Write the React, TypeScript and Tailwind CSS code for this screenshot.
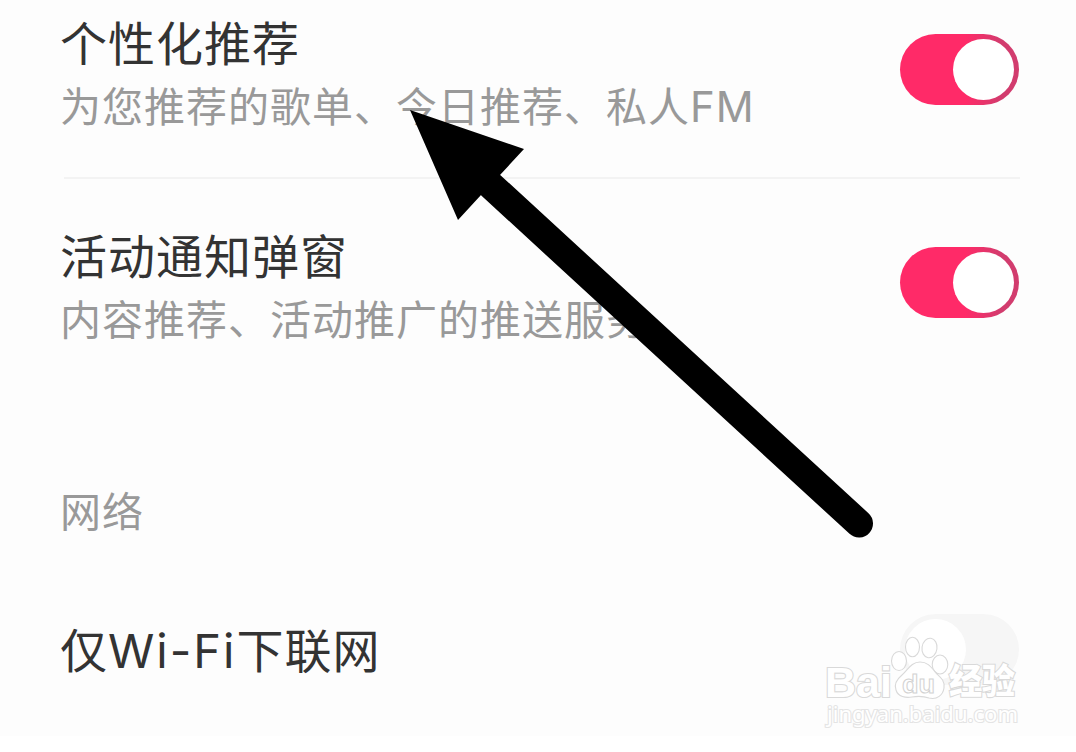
import React from 'react';
import { clsx } from 'clsx';

interface SwitchProps {
  checked: boolean;
  label: string;
}

const Switch: React.FC<SwitchProps> = ({ checked, label }) => (
  <button
    role="switch"
    aria-checked={checked}
    aria-label={label}
    className={clsx(
      'flex h-[71px] w-[119px] shrink-0 items-center rounded-full px-[5px]',
      checked
        ? 'justify-end bg-[linear-gradient(to_right,#ff2a68_55%,#d23c6e_85%)]'
        : 'justify-start bg-[#f6f6f6]'
    )}
  >
    <span className="size-[61px] rounded-full bg-white" />
  </button>
);

interface SettingRowProps {
  title: React.ReactNode;
  label: string;
  description?: React.ReactNode;
  checked: boolean;
}

const SettingRow: React.FC<SettingRowProps> = ({ title, label, description, checked }) => (
  <div className={clsx('flex justify-between', description ? 'items-start' : 'items-center')}>
    <div className="whitespace-nowrap">
      <h3
        className={clsx(
          'text-[47px] leading-[60px] tracking-[1px] text-[#333333]',
          description ? 'h-[62px]' : 'h-[64px]'
        )}
      >
        {title}
      </h3>
      {description && (
        <p className="h-[62px] text-[41px] leading-[62px] tracking-[1px] text-[#999999]">{description}</p>
      )}
    </div>
    <div className={clsx(description && 'pt-[23px]')}>
      <Switch checked={checked} label={label} />
    </div>
  </div>
);

const Watermark = () => (
  <svg
    className="absolute top-[630px] left-[820px]"
    width="210"
    height="105"
    viewBox="0 0 210 105"
    fill="#ffffff"
    stroke="#d9d9d9"
    strokeWidth="1.1"
  >
    <g className="[paint-order:stroke]" strokeWidth="2.2">
      <text x="5" y="67" fontSize="43" fontWeight="700" fontFamily="Liberation Sans" textLength="67" lengthAdjust="spacingAndGlyphs">Bai</text>
      <text x="129" y="64" fontSize="35" fontWeight="900" fontFamily="Noto Sans CJK SC" textLength="66" lengthAdjust="spacingAndGlyphs">经验</text>
      <text x="7" y="92" fontSize="22" fontWeight="400" fontFamily="Noto Sans" stroke="#e4e4e4" textLength="191" lengthAdjust="spacingAndGlyphs">jingyan.baidu.com</text>
    </g>
    <ellipse cx="79" cy="31" rx="7.5" ry="9.5" />
    <ellipse cx="92.5" cy="17" rx="7" ry="9.8" />
    <ellipse cx="109.5" cy="18" rx="7.5" ry="9.8" transform="rotate(8 109.5 18)" />
    <ellipse cx="120" cy="34.5" rx="7.8" ry="9.5" />
    <path d="M100 32C91 32 88 40 82 45C76 50 74 55 76 60C78 67 86 68 92 67C98 66 103 66 109 68C117 70 123 65 124 58C125 50 120 47 116 43C111 37 108 32 100 32Z" />
    <text x="82" y="62.5" fontSize="26" fontWeight="700" fontFamily="Liberation Sans" stroke="#d2d2d2" strokeWidth="1" textLength="33" lengthAdjust="spacingAndGlyphs">du</text>
  </svg>
);

export default function App() {
  return (
    <div className="relative h-[752px] w-[1076px] overflow-hidden bg-white font-['Noto_Sans_CJK_SC',sans-serif]">
      <main className="h-[736px] bg-[#fdfdfd] pr-[57px] pl-[60px]">
        <section className="h-[177px] pt-[11px]">
          <SettingRow
            title="个性化推荐"
            label="个性化推荐"
            description={
              <>
                为您推荐的歌单、今日推荐、私人<span className="font-['Inter',sans-serif] text-[42px] tracking-[1px]">FM</span>
              </>
            }
            checked
          />
        </section>
        <div className="mr-[-1px] ml-[4px] h-[2px] bg-[#f3f3f3]" />
        <section className="h-[299px] pt-[45px]">
          <SettingRow title="活动通知弹窗" label="活动通知弹窗" description="内容推荐、活动推广的推送服务" checked />
        </section>
        <h2 className="h-[62px] text-[41px] leading-[62px] tracking-[1px] text-[#999999]">网络</h2>
        <section className="pt-[74px]">
          <SettingRow
            title={
              <>
                仅<span className="font-['Inter',sans-serif] text-[47px] tracking-[2px]">Wi-Fi</span>下联网
              </>
            }
            label="仅Wi-Fi下联网"
            checked={false}
          />
        </section>
      </main>

      {/* pointer over the first row */}
      <svg className="pointer-events-none absolute inset-0" width="1076" height="752" viewBox="0 0 1076 752">
        <path d="M410 110L524 149L500 175L481 195L458 220Z" fill="#000000" />
        <path d="M491 185.5L859 523.5" stroke="#000000" strokeWidth="28" strokeLinecap="round" />
      </svg>

      <Watermark />
    </div>
  );
}
